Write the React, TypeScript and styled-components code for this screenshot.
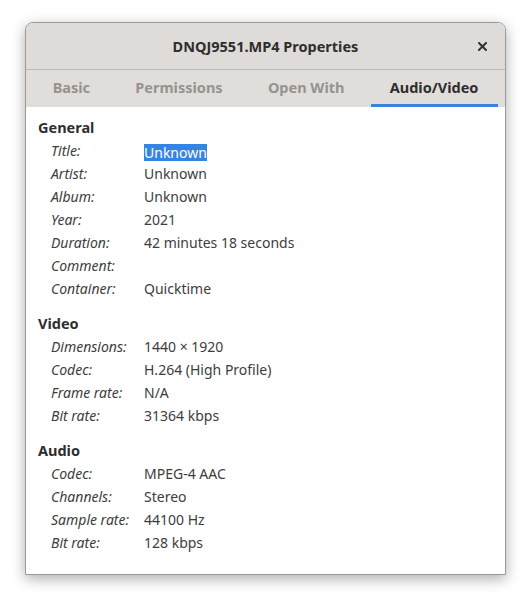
import React from 'react';
import styled, { createGlobalStyle } from 'styled-components';

const GlobalStyle = createGlobalStyle`
	html, body {
		margin: 0;
		padding: 0;
		background: #ffffff;
	}
	body {
		width: 532px;
		height: 604px;
		overflow: hidden;
		font-family: 'Noto Sans', 'DejaVu Sans', sans-serif;
		color: #3d3d3d;
	}
`;

const Window = styled.div`
	box-sizing: border-box;
	width: 481px;
	height: 553px;
	margin: 22px 0 0 25px;
	border: 1px solid #9b9996;
	border-radius: 8px 8px 0 0;
	background: #ffffff;
	box-shadow: 0 4px 14px rgba(0, 0, 0, 0.32);
	display: flex;
	flex-direction: column;
	overflow: hidden;
`;

const HeaderBar = styled.div`
	position: relative;
	height: 46px;
	flex: none;
	display: flex;
	align-items: center;
	justify-content: center;
	background: #dfdbd8;
	border-bottom: 1px solid #bfbbb7;
	font-size: 14.5px;
	font-weight: 700;
	color: #2e2e2e;
`;

const CloseButton = styled.button`
	position: absolute;
	right: 14px;
	top: 14px;
	width: 18px;
	height: 18px;
	padding: 0;
	border: none;
	background: transparent;
	display: flex;
	align-items: center;
	justify-content: center;
	color: #2e3436;
`;

const TabBar = styled.div`
	height: 37px;
	flex: none;
	display: flex;
	padding: 0 4px;
	background: #e1ddda;
`;

const Tab = styled.div<{ $active?: boolean }>`
	position: relative;
	flex: 1 1 auto;
	display: flex;
	align-items: center;
	justify-content: center;
	padding-bottom: 4px;
	font-size: 14.5px;
	font-weight: 700;
	color: ${(p) => (p.$active ? '#2e2e2e' : '#949390')};

	&::after {
		content: '';
		display: ${(p) => (p.$active ? 'block' : 'none')};
		position: absolute;
		left: 4px;
		right: 3px;
		bottom: 0;
		height: 3px;
		background: #3584e4;
	}
`;

const Content = styled.div`
	flex: 1;
	padding: 9px 12px 0;
	font-size: 14px;
`;

const Section = styled.div`
	margin-bottom: 12px;
`;

const SectionTitle = styled.div`
	font-size: 14.5px;
	font-weight: 700;
	line-height: 23px;
	color: #2e2e2e;
`;

const Grid = styled.div`
	display: grid;
	grid-template-columns: 93px 1fr;
	padding-left: 13px;
	line-height: 23px;
`;

const Label = styled.div`
	font-style: italic;
`;

const Value = styled.div``;

const Selected = styled.span`
	display: inline-block;
	line-height: 17px;
	vertical-align: middle;
	background: #3584e4;
	color: #ffffff;
`;

type Row = [string, string];

const sections: { title: string; rows: Row[] }[] = [
	{
		title: 'General',
		rows: [
			['Title:', 'Unknown'],
			['Artist:', 'Unknown'],
			['Album:', 'Unknown'],
			['Year:', '2021'],
			['Duration:', '42 minutes 18 seconds'],
			['Comment:', ''],
			['Container:', 'Quicktime'],
		],
	},
	{
		title: 'Video',
		rows: [
			['Dimensions:', '1440 × 1920'],
			['Codec:', 'H.264 (High Profile)'],
			['Frame rate:', 'N/A'],
			['Bit rate:', '31364 kbps'],
		],
	},
	{
		title: 'Audio',
		rows: [
			['Codec:', 'MPEG-4 AAC'],
			['Channels:', 'Stereo'],
			['Sample rate:', '44100 Hz'],
			['Bit rate:', '128 kbps'],
		],
	},
];

const tabs = ['Basic', 'Permissions', 'Open With', 'Audio/Video'];

const App = () => {
	return (
		<>
			<GlobalStyle />
			<Window>
				<HeaderBar>
					DNQJ9551.MP4 Properties
					<CloseButton aria-label="Close">
						<svg width="9" height="9" viewBox="0 0 9 9">
							<path d="M1 1 L8 8 M8 1 L1 8" stroke="currentColor" strokeWidth="2" strokeLinecap="square" />
						</svg>
					</CloseButton>
				</HeaderBar>
				<TabBar>
					{tabs.map((t) => (
						<Tab key={t} $active={t === 'Audio/Video'}>
							{t}
						</Tab>
					))}
				</TabBar>
				<Content>
					{sections.map((s, si) => (
						<Section key={s.title}>
							<SectionTitle>{s.title}</SectionTitle>
							<Grid>
								{s.rows.map(([label, value], ri) => (
									<React.Fragment key={label}>
										<Label>{label}</Label>
										<Value>
											{si === 0 && ri === 0 ? <Selected>{value}</Selected> : value}
										</Value>
									</React.Fragment>
								))}
							</Grid>
						</Section>
					))}
				</Content>
			</Window>
		</>
	);
};

export default App;
